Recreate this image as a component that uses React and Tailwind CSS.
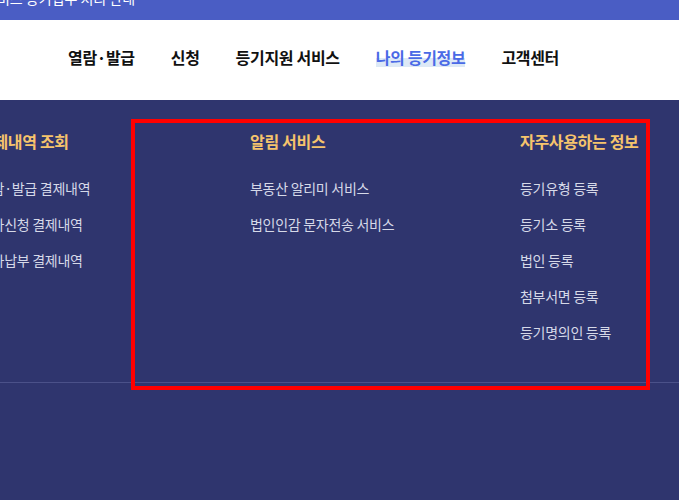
import React from 'react';

const font = { fontFamily: '"Noto Sans CJK KR", "Noto Sans", sans-serif' };

const navItems = ['열람·발급', '신청', '등기지원 서비스', '나의 등기정보', '고객센터'];

const columns = [
  {
    title: '결제내역 조회',
    width: 'w-[271px]',
    items: ['열람·발급 결제내역', '전자신청 결제내역', '전자납부 결제내역'],
  },
  {
    title: '알림 서비스',
    width: 'w-[270px]',
    items: ['부동산 알리미 서비스', '법인인감 문자전송 서비스'],
  },
  {
    title: '자주사용하는 정보',
    width: 'w-[200px]',
    items: ['등기유형 등록', '등기소 등록', '법인 등록', '첨부서면 등록', '등기명의인 등록'],
  },
];

const App = () => {
  return (
    <div className="relative w-[679px] h-[500px] overflow-hidden bg-white" style={font}>
      {/* top notice strip, cut at the top edge */}
      <div className="h-[20px] bg-[#4a5dc4] overflow-hidden">
        <div className="-mt-[12px] -ml-[16px] text-[14px] leading-[20px] text-white whitespace-nowrap">
          서비스 등기업무 처리 안내
        </div>
      </div>

      {/* main nav */}
      <div className="h-[80px] flex items-center pl-[68px] pb-[5px] gap-[36px]">
        {navItems.map((item) =>
          item === '나의 등기정보' ? (
            <span
              key={item}
              className="text-[16px] font-bold tracking-[-0.02em] text-[#4a6ae6] leading-[19px] bg-[linear-gradient(transparent_55%,#dde9f6_55%)]"
            >
              {item}
            </span>
          ) : (
            <span key={item} className="text-[16px] font-bold tracking-[-0.02em] text-[#111] leading-[19px]">
              {item}
            </span>
          )
        )}
      </div>

      {/* mega menu */}
      <div className="h-[400px] bg-[#2f356e] pt-[30px]">
        <div className="flex -ml-[21px]">
          {columns.map((col) => (
            <div key={col.title} className={`${col.width} shrink-0`}>
              <div className="text-[16px] font-bold tracking-[-0.02em] leading-[22px] text-[#f6c46c] whitespace-nowrap">
                {col.title}
              </div>
              <ul className="mt-[18px]">
                {col.items.map((it) => (
                  <li
                    key={it}
                    className="h-[36px] leading-[36px] text-[14px] tracking-[-0.02em] text-[#d6d9e8] whitespace-nowrap"
                  >
                    {it}
                  </li>
                ))}
              </ul>
            </div>
          ))}
        </div>
        <div className="absolute left-0 right-0 top-[382px] h-px bg-[#4b5189]" />
      </div>

      {/* highlight box */}
      <div className="absolute left-[131px] top-[119px] w-[519px] h-[271px] border-4 border-[#ff0000]" />
    </div>
  );
};

export default App;
